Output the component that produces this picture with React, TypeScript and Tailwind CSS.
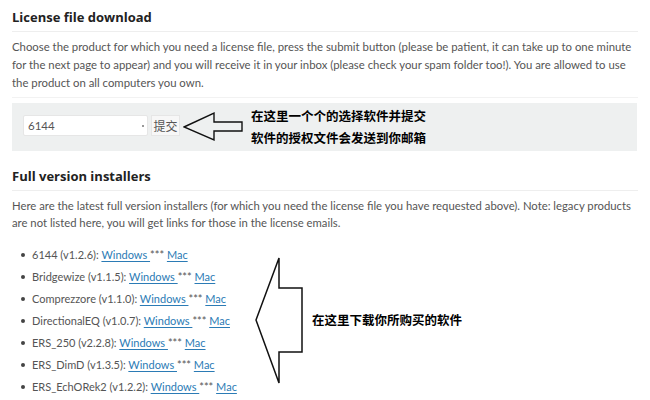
const products = [
  { name: "6144", version: "v1.2.6" },
  { name: "Bridgewize", version: "v1.1.5" },
  { name: "Comprezzore", version: "v1.1.0" },
  { name: "DirectionalEQ", version: "v1.0.7" },
  { name: "ERS_250", version: "v2.2.8" },
  { name: "ERS_DimD", version: "v1.3.5" },
  { name: "ERS_EchORek2", version: "v1.2.2" },
];

const cjk = "font-['Noto_Sans_CJK_SC',sans-serif]";

export default function App() {
  return (
    <div className="w-[650px] h-[400px] overflow-hidden bg-white px-[12px] font-['Lato','Noto_Sans_CJK_SC',sans-serif] text-[#555]">
      {/* License file section */}
      <h2 className="pt-[7px] pb-[4px] border-b border-[#eee] font-['Open_Sans',sans-serif] text-[13px] leading-[20px] font-bold text-[#222]">
        License file download
      </h2>
      <p className="mt-[6px] text-[11.35px] leading-[18px] whitespace-nowrap">
        Choose the product for which you need a license file, press the submit button (please be patient, it can take up to one minute
        <br />
        for the next page to appear) and you will receive it in your inbox (please check your spam folder too!). You are allowed to use
        <br />
        the product on all computers you own.
      </p>
      <div className="mt-[5px] h-px bg-[#f2f2f2]" />

      {/* Form with annotation */}
      <div className="mt-[5px] h-[48px] bg-[#eef0f0] flex items-center px-[11px] mr-[1px]">
        <div className="mb-[3px] w-[125px] h-[21px] bg-white border border-[#e6e6e6] rounded-[2px] flex items-center justify-between pl-[4px] pr-[3px] text-[11.5px] text-[#555]">
          <span>6144</span>
          <span className="w-[2px] h-[2px] bg-[#777] rounded-full" />
        </div>
        <div className={`mb-[3px] ml-[3px] w-[29px] h-[21px] bg-[#f7f7f7] border border-[#e6e6e6] flex items-center justify-center text-[12px] text-[#555] ${cjk}`}>
          提交
        </div>
        <svg width="62" height="31" viewBox="0 0 62 31" className="ml-[3px] mb-[2px]">
          <polygon
            points="1,16 31,2 31,11 59,11 59,20 31,20 31,29"
            fill="none"
            stroke="#111"
            strokeWidth="1.4"
            strokeLinejoin="miter"
          />
        </svg>
        <div className={`ml-[6px] flex flex-col text-[12.5px] leading-[22px] font-bold text-black ${cjk}`}>
          <span>在这里一个个的选择软件并提交</span>
          <span>软件的授权文件会发送到你邮箱</span>
        </div>
      </div>

      {/* Installers section */}
      <h2 className="mt-[8px] pt-[7px] pb-[4px] border-b border-[#eee] font-['Open_Sans',sans-serif] text-[13px] leading-[20px] font-bold text-[#222]">
        Full version installers
      </h2>
      <p className="mt-[6px] text-[11.3px] leading-[17px] whitespace-nowrap">
        Here are the latest full version installers (for which you need the license file you have requested above). Note: legacy products
        <br />
        are not listed here, you will get links for those in the license emails.
      </p>

      <div className="mt-[13px] flex items-center">
        <ul className="w-[242px] shrink-0">
          {products.map((p) => (
            <li key={p.name} className="flex items-center h-[22px] text-[11px] whitespace-nowrap">
              <span className="shrink-0 ml-[9px] mr-[7px] w-[4px] h-[4px] rounded-full bg-[#444]" />
              <span>
                {p.name} ({p.version}):{" "}
                <a className="text-[#2b7bb5] underline underline-offset-2">Windows </a>
                {" "}*** <a className="text-[#2b7bb5] underline underline-offset-2">Mac</a>
              </span>
            </li>
          ))}
        </ul>
        <svg width="50" height="130" viewBox="0 0 50 130" className="shrink-0">
          <polygon
            points="2,64 25,2 25,32 48,32 48,96 25,96 25,127"
            fill="none"
            stroke="#111"
            strokeWidth="1.5"
          />
        </svg>
        <span className={`ml-[8px] mb-[2px] text-[12.5px] font-bold text-black ${cjk}`}>
          在这里下载你所购买的软件
        </span>
      </div>
    </div>
  );
}
